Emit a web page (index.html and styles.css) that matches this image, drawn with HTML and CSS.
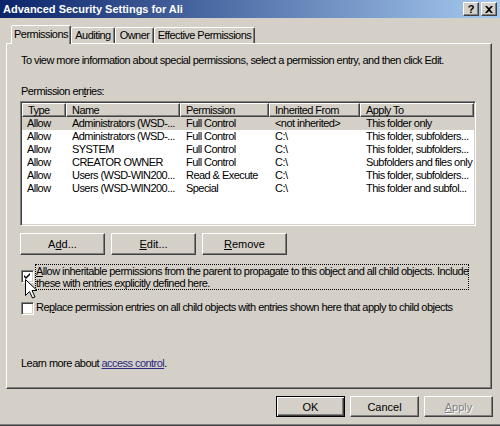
FILE: index.html
```html
<!DOCTYPE html>
<html>
<head>
<meta charset="utf-8">
<link rel="stylesheet" href="styles.css">
</head>
<body>
<div class="window">
  <div class="titlebar">
    <span class="title">Advanced Security Settings for Ali</span>
    <div class="caption-btns">
      <span class="cbtn help">?</span>
      <span class="cbtn close"><svg width="8" height="7" viewBox="0 0 8 7"><path d="M0 0h2l2 2 2-2h2L5 3.5 8 7H6L4 5 2 7H0l3-3.5z" fill="#000"/></svg></span>
    </div>
  </div>
  <div class="tabs">
    <div class="tab active w-perm">Permissions</div>
    <div class="tab w-aud">Auditing</div>
    <div class="tab w-own">Owner</div>
    <div class="tab w-eff">Effective Permissions</div>
  </div>
  <div class="panel">
    <p class="intro">To view more information about special permissions, select a permission entry, and then click Edit.</p>
    <p class="label">Permission en<u>t</u>ries:</p>
    <div class="listbox">
      <div class="grid lv-header">
        <span>Type</span><span>Name</span><span>Permission</span><span>Inherited From</span><span>Apply To</span>
      </div>
      <div class="grid lv-row selected">
        <span>Allow</span><span>Administrators (WSD-...</span><span>Full Control</span><span>&lt;not inherited&gt;</span><span>This folder only</span>
      </div>
      <div class="grid lv-row">
        <span>Allow</span><span>Administrators (WSD-...</span><span>Full Control</span><span>C:\</span><span>This folder, subfolders...</span>
      </div>
      <div class="grid lv-row">
        <span>Allow</span><span>SYSTEM</span><span>Full Control</span><span>C:\</span><span>This folder, subfolders...</span>
      </div>
      <div class="grid lv-row">
        <span>Allow</span><span>CREATOR OWNER</span><span>Full Control</span><span>C:\</span><span>Subfolders and files only</span>
      </div>
      <div class="grid lv-row">
        <span>Allow</span><span>Users (WSD-WIN200...</span><span>Read &amp; Execute</span><span>C:\</span><span>This folder, subfolders...</span>
      </div>
      <div class="grid lv-row">
        <span>Allow</span><span>Users (WSD-WIN200...</span><span>Special</span><span>C:\</span><span>This folder and subfol...</span>
      </div>
    </div>
    <div class="btn-row">
      <button class="btn">A<u>d</u>d...</button>
      <button class="btn"><u>E</u>dit...</button>
      <button class="btn"><u>R</u>emove</button>
    </div>
    <div class="option first">
      <span class="check"><svg width="9" height="9" viewBox="0 0 9 9"><path d="M1 3v2l2 2 4-4V1L3 5z" fill="#000"/></svg></span>
      <span class="focus"><u>A</u>llow inheritable permissions from the parent to propagate to this object and all child objects. Include<br>these with entries explicitly defined here.</span>
      <svg class="cursor" width="12" height="20" viewBox="0 0 12 20"><path d="M0.5 0.5v16l4-4 3 6.5 2.5-1-3-6.5h5z" fill="#fff" stroke="#000" stroke-width="1"/></svg>
    </div>
    <div class="option second">
      <span class="check"></span>
      <span class="plain">Re<u>p</u>lace permission entries on all child objects with entries shown here that apply to child objects</span>
    </div>
    <p class="learn">Learn more about <a class="link">access control</a>.</p>
  </div>
  <div class="footer">
    <button class="btn dlg default">OK</button>
    <button class="btn dlg">Cancel</button>
    <button class="btn dlg disabled"><u>A</u>pply</button>
  </div>
</div>
</body>
</html>
```
FILE: styles.css
```css
body {
  margin: 0;
  font-family: "Liberation Sans", Arial, sans-serif;
  font-size: 11px;
  letter-spacing: -0.55px;
  color: #000;
}
.window {
  width: 500px;
  height: 426px;
  background: #d4d0c8;
  box-sizing: border-box;
  border-bottom: 1px solid #404040;
  box-shadow: inset 0 -1px #808080;
  display: flex;
  flex-direction: column;
  overflow: hidden;
}
.titlebar {
  height: 18px;
  flex: none;
  background: linear-gradient(to right, #0a246a, #a6caf0);
  display: flex;
  align-items: center;
  justify-content: space-between;
  padding: 0 3px;
}
.title {
  color: #fff;
  font-weight: bold;
  font-size: 11px;
  letter-spacing: 0;
}
.caption-btns {
  display: flex;
  gap: 2px;
}
.cbtn {
  width: 16px;
  height: 14px;
  box-sizing: border-box;
  background: #d4d0c8;
  border: 1px solid;
  border-color: #fff #404040 #404040 #fff;
  box-shadow: inset -1px -1px #808080;
  display: flex;
  align-items: center;
  justify-content: center;
  font-weight: bold;
  font-size: 11px;
  letter-spacing: 0;
  line-height: 1;
}
.tabs {
  display: flex;
  align-items: flex-end;
  height: 19px;
  margin-top: 6px;
  padding-left: 11px;
  flex: none;
}
.tab {
  box-sizing: border-box;
  height: 16px;
  border: 1px solid;
  border-bottom: none;
  border-color: #fff #404040 transparent #fff;
  box-shadow: inset -1px 0 #808080;
  border-radius: 2px 2px 0 0;
  text-align: center;
  line-height: 13px;
  padding-top: 1px;
  background: #d4d0c8;
  white-space: nowrap;
}
.tab.active {
  height: 19px;
  margin-bottom: -1px;
  padding-top: 2px;
  position: relative;
  z-index: 1;
}
.w-perm { width: 60px; }
.w-aud { width: 44px; }
.w-own { width: 39px; }
.w-eff { width: 101px; }
.panel {
  margin: 0 8px 0 6px;
  height: 346px;
  flex: none;
  box-sizing: border-box;
  border: 1px solid;
  border-color: #fff #404040 #404040 #fff;
  box-shadow: inset -1px -1px #808080;
  padding: 10px 14px 0 14px;
  display: flex;
  flex-direction: column;
}
.intro {
  margin: 0;
  line-height: 13px;
  white-space: nowrap;
}
.label {
  margin: 18px 0 0;
  line-height: 13px;
}
.listbox {
  margin: 3px 0 0 -1px;
  width: 456px;
  height: 125px;
  box-sizing: border-box;
  background: #fff;
  border: 1px solid;
  border-color: #808080 #fff #fff #808080;
  box-shadow: inset 1px 1px #404040, inset -1px -1px #d4d0c8;
  padding: 1px;
}
.grid {
  display: grid;
  grid-template-columns: 44px 114px 89px 91px 114px;
}
.grid span {
  white-space: nowrap;
  overflow: hidden;
}
.lv-header {
  height: 14px;
}
.lv-header span {
  box-sizing: border-box;
  background: #d4d0c8;
  border-top: 1px solid #fff;
  border-left: 1px solid #fff;
  border-right: 1px solid #404040;
  border-bottom: 1px solid #404040;
  box-shadow: inset -1px -1px #808080;
  padding-left: 5px;
  line-height: 12px;
}
.lv-row {
  height: 13px;
  line-height: 13px;
}
.lv-row span {
  padding-left: 6px;
}
.lv-row span:first-child {
  padding-left: 5px;
}
.lv-row.selected {
  background: #d4d0c8;
}
.btn-row {
  display: flex;
  gap: 6px;
  margin: 7px 0 0 -1px;
}
.btn {
  width: 85px;
  height: 22px;
  box-sizing: border-box;
  background: #d4d0c8;
  border: 1px solid;
  border-color: #fff #404040 #404040 #fff;
  box-shadow: inset -1px -1px #808080;
  display: flex;
  align-items: center;
  justify-content: center;
  font: inherit;
  color: #000;
  padding: 0;
  margin: 0;
}
.option {
  display: flex;
  align-items: flex-start;
  position: relative;
}
.option.first {
  margin-top: 9px;
}
.option.second {
  margin-top: 12px;
}
.check {
  width: 13px;
  height: 13px;
  flex: none;
  box-sizing: border-box;
  background: #fff;
  border: 1px solid;
  border-color: #808080 #fff #fff #808080;
  box-shadow: inset 1px 1px #404040, inset -1px -1px #d4d0c8;
  display: flex;
  align-items: center;
  justify-content: center;
}
.option.first .check {
  margin-top: 6px;
}
.focus {
  margin-left: 1px;
  width: 434px;
  box-sizing: border-box;
  border: 1px dotted #000;
  line-height: 12px;
  white-space: nowrap;
}
.plain {
  margin-left: 2px;
  margin-top: -1px;
  line-height: 13px;
  white-space: nowrap;
}
.cursor {
  position: absolute;
  left: 4px;
  top: 15px;
}
.learn {
  margin: 42px 0 0;
  line-height: 13px;
}
.link {
  color: #2a2a80;
  text-decoration: underline;
}
.footer {
  display: flex;
  justify-content: flex-end;
  gap: 5px;
  margin-top: 7px;
  padding-right: 7px;
}
.btn.dlg {
  width: 69px;
  height: 21px;
}
.btn.default {
  border: 1px solid #000;
  box-shadow: inset 1px 1px #fff, inset -1px -1px #404040, inset -2px -2px #808080;
}
.btn.disabled {
  color: #808080;
  text-shadow: 1px 1px #fff;
}
```
